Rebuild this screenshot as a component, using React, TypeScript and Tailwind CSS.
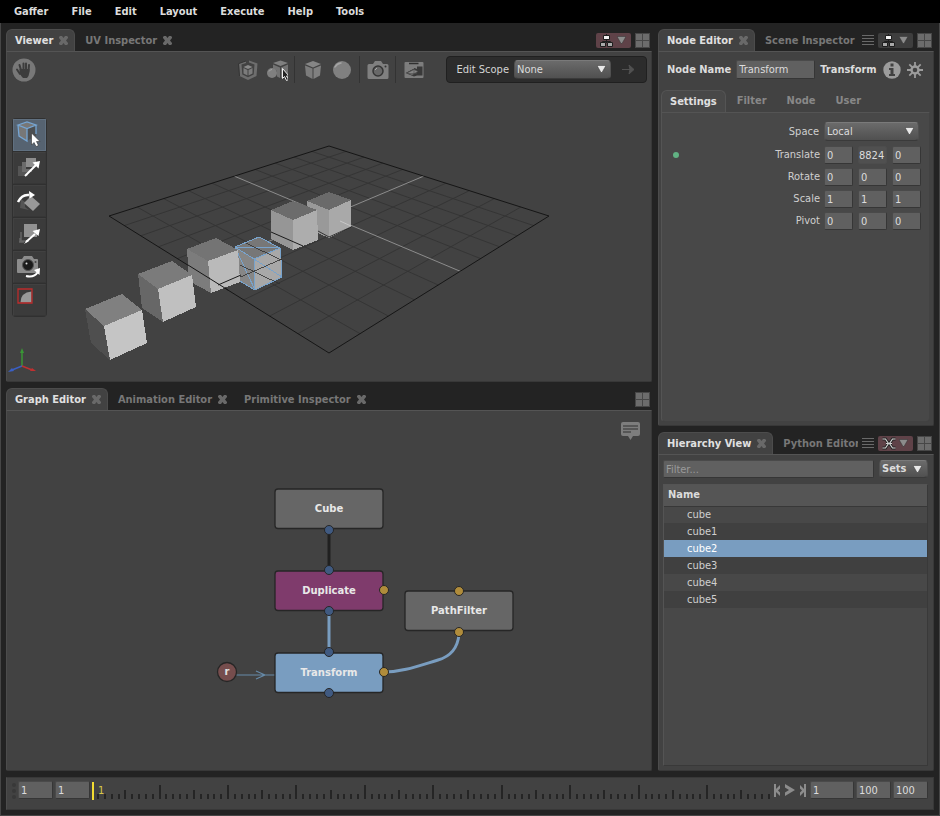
import { useState } from "react";
import type { ReactNode } from "react";
import clsx from "clsx";

const menus = ["Gaffer", "File", "Edit", "Layout", "Execute", "Help", "Tools"];
const cubes = ["cube", "cube1", "cube2", "cube3", "cube4", "cube5"];
const transformRows = [
  { label: "Translate", values: ["0", "8824", "0"], edited: true },
  { label: "Rotate", values: ["0", "0", "0"] },
  { label: "Scale", values: ["1", "1", "1"] },
  { label: "Pivot", values: ["0", "0", "0"] },
];

const field =
  "rounded-xs border border-t-[#4a4a4a] border-l-[#4a4a4a] border-r-[#363636] border-b-[#363636] bg-[#606060] text-[#dcdcdc] outline-none placeholder:text-[#9a9a9a]";
const raised =
  "rounded-sm border border-[#505050] border-t-[#7a7a7a] border-b-[#3a3a3a] bg-linear-to-b from-[#6b6b6b] to-[#505050] text-[#dcdcdc]";

// ─── Small shared icons ──────────────────────────────────────────────────
function CloseIcon() {
  return (
    <svg className="size-[9px]" viewBox="0 0 9 9">
      <path d="M1 0h2l1.500 2L6 0h2l1 1v1L7 4.500 9 7v1L8 9H6L4.500 7 3 9H1L0 8V7l2-2.500L0 2V1z" fill="#696969" />
    </svg>
  );
}

function LayoutButton() {
  return (
    <button aria-label="Panel layout" className="size-[15px] shrink-0">
      <svg viewBox="0 0 15 15" className="block size-[15px]">
        <path d="M0 0h15v15H0z" fill="#474747" />
        <path d="M1 1h6v6H1zM8 1h6v6H8zM1 8h6v6H1zM8 8h6v6H8z" fill="#6c6c6c" />
      </svg>
    </button>
  );
}

function TriangleDown({ className }: { className?: string }) {
  return (
    <svg className={clsx("h-[8px] w-[9px]", className)} viewBox="0 0 9 8">
      <path d="M0 0.500h9L5 7.500H4z" fill="currentColor" stroke="#333" strokeWidth="0.500" />
    </svg>
  );
}

function FocusButton({ kind, pinned }: { kind: "tree" | "links"; pinned?: boolean }) {
  return (
    <button
      aria-label="Node set"
      className={clsx(
        "flex h-[15px] w-[35px] shrink-0 items-center justify-between rounded-xs pr-[5px] pl-1 text-[#8c8c8c]",
        pinned ? "bg-[#5f4248]" : "bg-[#3e3e3e]"
      )}
    >
      <svg className="h-[13px] w-[14px]" viewBox="0 0 14 13">
        {kind === "tree" ? (
          <>
            <path d="M6.500 0v9M2.500 9.500V7.500h8v2" stroke="#1e1e1e" fill="none" />
            <path d="M3.500 1.500h6v4h-6zM0.500 8.500h5v4h-5zM7.500 8.500h5v4h-5z" fill="#aaa" stroke="#1e1e1e" />
            <path d="M4 2h5v3H4z" fill="#f0f0f0" />
          </>
        ) : (
          <>
            <path d="M0.500 2h3l3 4.500-3 4.500h-3M13.500 2h-3l-3 4.500 3 4.500h3M4 6.500h6" stroke="#222" strokeWidth="3" fill="none" />
            <path d="M0.500 2h3l3 4.500-3 4.500h-3M13.500 2h-3l-3 4.500 3 4.500h3M4 6.500h6" stroke="#d0d0d0" strokeWidth="1.200" fill="none" />
          </>
        )}
      </svg>
      <TriangleDown />
    </button>
  );
}

function TabListButton() {
  return (
    <button aria-label="All tabs" className="h-[15px] w-[12px] shrink-0">
      <svg viewBox="0 0 12 15" className="block">
        <path d="M0 2.500h12M0 5.500h12M0 8.500h12M0 11.500h12" stroke="#696969" />
      </svg>
    </button>
  );
}

type PanelProps = { tabs: string[]; tools: ReactNode; className: string; lastClosable?: boolean; children: ReactNode };

function Panel({ tabs, tools, className, lastClosable = true, children }: PanelProps) {
  return (
    <section className={clsx("flex min-h-0 flex-col", className)}>
      <div className="flex h-[22px] shrink-0 items-center gap-[4px] pr-[2px]">
        <div role="tablist" className="flex h-full min-w-0 flex-1 gap-px overflow-hidden">
          {tabs.map((tab, i) => (
            <div
              key={tab}
              className={clsx(
                "flex h-full shrink-0 items-center gap-1.5 rounded-t-md pr-[6px] pl-[8px] font-bold",
                i === 0
                  ? "border border-b-0 border-[#4c4c4c] bg-[#424242] text-[#e0e0e0]"
                  : "border border-b-0 border-transparent text-[#777]"
              )}
            >
              <button role="tab" aria-selected={i === 0}>
                {tab}
              </button>
              {(i < tabs.length - 1 || lastClosable) && (
                <button aria-label={`Close ${tab}`}>
                  <CloseIcon />
                </button>
              )}
            </div>
          ))}
        </div>
        {tools}
      </div>
      <div className="relative flex min-h-0 flex-1 flex-col rounded-b-xs border border-[#383838] border-t-[#545454] border-l-[#4c4c4c] bg-[#424242]">
        {children}
      </div>
    </section>
  );
}

// ─── Viewer scene ────────────────────────────────────────────────────────
// Projects a point of the unit ground square onto the view
function project(u: number, v: number) {
  const w = 1 - 0.2445 * (u + v);
  return [(85.8 * u - 246.65 * v + 329) / w, (17.2 * (u + v) + 146) / w];
}

function gridLine(u1: number, v1: number, u2: number, v2: number) {
  const [x1, y1] = project(u1, v1);
  const [x2, y2] = project(u2, v2);
  return `M${x1} ${y1}L${x2} ${y2}`;
}

const steps = [0.1, 0.2, 0.3, 0.4, 0.6, 0.7, 0.8, 0.9];
const gridPath = steps.map((t) => gridLine(t, 0, t, 1) + gridLine(0, t, 1, t)).join("");

const sceneCubes = [
  { top: "307,201 329,192 351,200 329,210", left: "307,201 329,210 329,238 307,228", right: "329,210 351,200 351,227 329,238", fill: ["#6a6a6a", "#999", "#a9a9a9"] },
  { top: "271,210 293,201 317,210 293,220", left: "271,210 293,220 293,250 271,239", right: "293,220 317,210 318,240 293,250", fill: ["#6c6c6c", "#969696", "#adadad"] },
  { top: "235,247 259,237 280,248 254,259", left: "235,247 254,259 255,290 238,280", right: "254,259 280,248 282,277 255,290", fill: ["#777", "#868686", "#a8a8a8"] },
  { top: "187,249 216,238 238,250 208,261", left: "187,249 208,261 211,293 189,281", right: "208,261 238,250 240,282 211,293", fill: ["#747474", "#7c7c7c", "#bababa"] },
  { top: "138,274 172,261 192,275 158,289", left: "138,274 158,289 163,322 142,308", right: "158,289 192,275 196,307 163,322", fill: ["#7b7b7b", "#676767", "#c0c0c0"] },
  { top: "85,309 122,294 142,310 104,326", left: "85,309 104,326 110,360 91,343", right: "104,326 142,310 147,343 110,360", fill: ["#808080", "#4f4f4f", "#c5c5c5"] },
];

function Scene() {
  return (
    <svg className="absolute inset-0 size-full" viewBox="7 52 644 329" aria-label="3D view">
      <g fill="none" strokeWidth="1">
        <path d={gridPath} stroke="#353535" />
        <path d={gridLine(0.5, 0, 0.5, 1) + gridLine(0, 0.5, 1, 0.5)} stroke="#8c8c8c" />
        <path d="M329 146L549 216L329 353L109 216Z" stroke="#161616" />
      </g>
      <g shapeRendering="crispEdges">
        {sceneCubes.map((c) => (
          <g key={c.top}>
            <polygon points={c.left} fill={c.fill[1]} />
            <polygon points={c.right} fill={c.fill[2]} />
            <polygon points={c.top} fill={c.fill[0]} />
            {c.top.startsWith("235") && (
              <>
                <path
                  d="M235 247L259 237L280 248V258M281 260L282 277L255 290L238 280M235 247L254 259L280 248M254 259L255 290M235 247H280M235 247L255 290M254 259L282 277"
                  fill="none"
                  stroke="#78a3cc"
                />
                <path d="M246 243L281 260M240 265L280 284M222 285L282 259" fill="none" stroke="#2f2f2f" strokeWidth="0.800" />
              </>
            )}
          </g>
        ))}
      </g>
      <g fill="none" stroke="#1b1b1b">
        <path d="M188 265L228 290" stroke="#161616" />
        <path d="M218 285L241 275M271 232L303 246" />
        <path d="M318 231L329 237L351 227" strokeWidth="0.800" />
        <path d="M340 221L351 226" stroke="#c8c8c8" />
      </g>
      <g fill="none" strokeWidth="1.500">
        <path d="M22 366V352" stroke="#3a9636" />
        <path d="M22 366L12 370" stroke="#3a5fc4" />
        <path d="M22 366L32 370" stroke="#c03030" />
      </g>
      <path d="M20 353L22 348L24 353z" fill="#3a9636" />
      <path d="M8 372L12 368L14 371z" fill="#3a5fc4" />
      <path d="M36 371L32 368L30 371z" fill="#c03030" />
    </svg>
  );
}

// ─── Viewer icons ────────────────────────────────────────────────────────
const cubeFaces = (
  <>
    <path d="M3 5l8-3 8 3-8 3.500z" fill="#858585" />
    <path d="M3 6.500l7.500 3V20L4 16.500z" fill="#7c7c7c" />
    <path d="M19 6.500l-7.500 3V20l6.500-3.500z" fill="#808080" />
  </>
);

const viewerIcons: Record<string, ReactNode> = {
  expand: (
    <>
      <path d="M2 4.500L9 2v2L4.500 5.500l.800 10 5.700 2.800 5.700-2.800.800-10L12 3.500V1.500l8.500 3-1 12.500-8.500 4-8.500-4z" fill="#6e6e6e" />
      <path d="M2 4.500L9 2M2.500 17L1.500 4.500" stroke="#343434" fill="none" />
      <path d="M6.500 8L11 6l4.500 2L11 10z" fill="#8a8a8a" />
      <path d="M6.500 9l4 2v5.500l-4-2zM15.500 9l-4 2v5.500l4-2z" fill="#7c7c7c" />
    </>
  ),
  select: (
    <>
      <path d="M7 4l7.500-2.500L22 4l-7.500 3z" fill="#808080" />
      <path d="M7 5.500l7 3V19l-3-1.500V12L7 9zM22 5.500l-7 3V19l7-3z" fill="#737373" />
      <circle cx="6" cy="14" r="5" fill="#808080" />
      <path d="M3 12.500q1-2 3-2" stroke="#a5a5a5" fill="none" />
      <path d="M16.500 9.500v10l2-2 2 4 2-1-2-3.500H23z" fill="#222" stroke="#eee" />
    </>
  ),
  solid: cubeFaces,
  sphere: (
    <>
      <circle cx="11" cy="11" r="9" fill="#808080" />
      <path d="M4 8a8 8 0 0 1 6-4" stroke="#a5a5a5" strokeWidth="1.500" fill="none" strokeLinecap="round" />
    </>
  ),
  camera: (
    <>
      <path d="M2 5h4l2-3h6l2 3h4a1.500 1.500 0 0 1 1.500 1.500v12A1.500 1.500 0 0 1 20 20H2a1.500 1.500 0 0 1-1.500-1.500v-12A1.500 1.500 0 0 1 2 5z" fill="#808080" />
      <circle cx="11" cy="12" r="5" fill="#686868" stroke="#353535" strokeWidth="1.500" />
      <path d="M8 11l2-2" stroke="#aaa" />
      <circle cx="18.500" cy="7.500" r="1" fill="#353535" />
    </>
  ),
  clip: (
    <>
      <rect x="1.500" y="3" width="19" height="16" rx="1" fill="#7d7d7d" />
      <path d="M6 4.500h9.500" stroke="#303030" strokeWidth="1.500" />
      <path d="M2.500 14l9-5 2.500 1V7.500h5.500v9H14l-3 1z" fill="#393939" />
      <path d="M2.500 7.500h8.500v2l-8.500 4z" fill="#7d7d7d" />
      <path d="M4 14l7-3.500 4 2-6 3.500zM11 10.500v5M5 14.500h9" fill="#858585" stroke="#4b4b4b" strokeWidth="0.600" />
    </>
  ),
};

function IconButton({ name, label }: { name: string; label: string }) {
  return (
    <button aria-label={label} className="flex size-[22px] items-center justify-center">
      <svg viewBox="0 0 22 22" className="size-[22px]">
        {viewerIcons[name]}
      </svg>
    </button>
  );
}

function Divider() {
  return <div className="-ml-px h-[27px] w-px bg-[#333]" />;
}

const toolIcons: { label: string; icon: ReactNode }[] = [
  {
    label: "Selection tool",
    icon: (
      <>
        <path d="M6 6l9-3 9 3v11l-9 5-8-5z" fill="#777" />
        <path d="M15 9.500l9-3.500v11l-9 5z" fill="#4c4f52" />
        <path d="M6 6l9-3 9 3-9 3.500zM6 6l1 11 8 5V9.500M24 6v9" fill="none" stroke="#75a5d3" strokeWidth="1.300" />
        <path d="M19.500 14v12l2.500-2.500 2 4 2.500-1-2-4H28z" fill="#fff" stroke="#333" strokeWidth="0.600" />
      </>
    ),
  },
  {
    label: "Translate tool",
    icon: (
      <>
        <path d="M6 14h4v6h6v4H6z" fill="#555" />
        <path d="M10 10h4v7h6v3H10z" fill="#6b6b6b" />
        <path d="M14 6h10v9H14z" fill="#8d8d8d" />
        <path d="M13 24L24 13" stroke="#fff" strokeWidth="2" />
        <path d="M20.500 10.500L28 9l-1.500 7.500z" fill="#fff" />
      </>
    ),
  },
  {
    label: "Rotate tool",
    icon: (
      <>
        <path d="M8 23l1-9 4 3v5l4 3z" fill="#555" />
        <path d="M19 11l9 8-7 7-9-8z" fill="#999" />
        <path d="M6 17q4-8 11-7" fill="none" stroke="#fff" strokeWidth="2.500" />
        <path d="M17 6l6 4-5.500 3.500z" fill="#fff" />
      </>
    ),
  },
  {
    label: "Scale tool",
    icon: (
      <>
        <path d="M8 24v-4M7 24h5M9 14v9h7" fill="none" stroke="#666" strokeWidth="1.500" />
        <path d="M12 6h13v13H12z" fill="#929292" />
        <path d="M14 24l9-8" stroke="#fff" strokeWidth="2" />
        <path d="M12 26l3-4 2 1zM20.500 13L28 11l-1.500 7z" fill="#fff" />
      </>
    ),
  },
  {
    label: "Camera tool",
    icon: (
      <>
        <path d="M6 8h4l2-3h8l2 3h3q1 0 1 1v12q0 1-1 1H6q-1 0-1-1V9q0-1 1-1z" fill="#8c8c8c" />
        <circle cx="16" cy="14" r="5.500" fill="#1b1b1b" stroke="#555" />
        <circle cx="14.500" cy="12.500" r="1" fill="#ddd" />
        <circle cx="23.500" cy="11" r="1" fill="#444" />
        <path d="M14 25q8 2 12-4" fill="none" stroke="#fff" strokeWidth="2" />
        <path d="M22 19l6-2-.500 7z" fill="#fff" />
      </>
    ),
  },
  {
    label: "Crop window tool",
    icon: (
      <>
        <path d="M8.500 18.500q0-10 11-11v11z" fill="#999" />
        <path d="M6 5h14v14H6z" fill="none" stroke="#bd2c2c" strokeWidth="1.300" />
      </>
    ),
  },
];

function Viewer() {
  return (
    <>
      <Scene />
      <div className="relative mt-[4px] flex h-[27px] items-center gap-[7px] pr-[4px] pl-[5px]">
        <button aria-label="Pause" className="size-[24px]">
          <svg viewBox="0 0 24 24">
            <circle cx="12" cy="12" r="11.500" fill="#787878" />
            <g stroke="#3c3c3c" strokeWidth="2" strokeLinecap="round">
              <path d="M9 12L7.500 7M11.500 12V5.500M14 12V5.500M16.500 13l.500-6M8 16l-3-4.500" />
            </g>
            <path d="M7.500 11h10v3q-.500 4-2.500 6h-4q-2-2-3.500-5z" fill="#3c3c3c" />
          </svg>
        </button>
        <div className="flex-1" />
        <IconButton name="expand" label="Expansion" />
        <IconButton name="select" label="Selection mask" />
        <Divider />
        <IconButton name="solid" label="Drawing mode" />
        <IconButton name="sphere" label="Shading mode" />
        <Divider />
        <IconButton name="camera" label="Camera" />
        <Divider />
        <IconButton name="clip" label="Gadgets" />
        <div className="ml-[14px] flex h-[27px] items-center gap-[5px] rounded-sm border border-[#202020] bg-[#2c2c2c] pr-[11px] pl-[10px]">
          <label htmlFor="scope" className="text-[#d4d4d4]">
            Edit Scope
          </label>
          <Dropdown id="scope" value="None" className="w-[97px]" />
          <button aria-label="Edit scope actions" className="ml-[5px]">
            <svg className="h-[11px] w-[14px]" viewBox="0 0 14 11">
              <path d="M1 5.500h9M8 1l5 4.500L8 10l1-4.500z" fill="#515151" stroke="#515151" />
            </svg>
          </button>
        </div>
      </div>
      <div className="relative mt-[35px] ml-[5px] flex w-[35px] flex-col gap-px overflow-hidden rounded-sm bg-[#303030] p-px">
        {toolIcons.map(({ label, icon }, i) => (
          <button
            key={label}
            aria-label={label}
            className={clsx("h-[32px] border", i === 0 ? "border-[#607080] bg-[#566371]" : "border-[#414141] border-r-[#393939] border-b-[#363636] bg-[#3b3b3b]")}
          >
            <svg viewBox="2 1 31 30" className="block h-[30px] w-[31px]">
              {icon}
            </svg>
          </button>
        ))}
      </div>
    </>
  );
}

function Dropdown({ id, value, className }: { id: string; value: string; className: string }) {
  return (
    <div className={clsx("relative", className)}>
      <select id={id} className={clsx("block h-[19px] w-full appearance-none pr-4 pl-[2px] leading-4", raised)}>
        <option>{value}</option>
      </select>
      <TriangleDown className="pointer-events-none absolute top-[5px] right-[5px] text-[#e8e8e8]" />
    </div>
  );
}

// ─── Graph editor ────────────────────────────────────────────────────────
const graphNodes = [
  { name: "Cube", x: 275, y: 489, fill: "#666" },
  { name: "Duplicate", x: 275, y: 571, fill: "#7f3b6c" },
  { name: "PathFilter", x: 405, y: 591, fill: "#666" },
  { name: "Transform", x: 275, y: 653, fill: "#799dc0" },
];

const bluePlugs = [[329, 530], [329, 570], [329, 611], [329, 652], [329, 693]];
const goldPlugs = [[384, 590], [459, 591], [459, 632], [384, 672]];

function GraphEditor() {
  return (
    <>
      <button aria-label="Annotations" className="absolute top-[10px] right-[10px] w-[21px]">
        <svg viewBox="0 0 21 20">
          <path d="M3 1h15q2 0 2 2v10q0 2-2 2h-5l-2.500 4L8 15H3q-2 0-2-2V3q0-2 2-2z" fill="#7d7d7d" />
          <path d="M3 5h15M3 8h15M3 11h8" stroke="#494949" strokeWidth="1.600" />
        </svg>
      </button>
      <svg className="size-full" viewBox="7 411 644 359" aria-label="Node graph">
        <path d="M329 530V570" stroke="#202020" strokeWidth="3" />
        <path d="M329 611V652" stroke="#799dc0" strokeWidth="3" />
        <path d="M384 672C402 672 418 666 438 660C452 656 458 646 459 634" fill="none" stroke="#799dc0" strokeWidth="3" />
        <path d="M236 675H275M256 671L265 675L256 679" fill="none" stroke="#668aa8" strokeWidth="1.200" />
        {graphNodes.map(({ name, x, y, fill }) => (
          <g key={name}>
            <rect x={x} y={y} width="108" height="39.500" rx="3" fill={fill} stroke="#262626" strokeWidth="1.300" />
            <text x={x + 54} y={y + 23} textAnchor="middle" fill="#e8e8e8" className="font-['DejaVu_Sans',sans-serif] text-[10px] font-bold">
              {name}
            </text>
          </g>
        ))}
        {bluePlugs.map(([x, y]) => (
          <circle key={y} cx={x} cy={y} r="4.500" fill="#405a81" stroke="#262626" />
        ))}
        {goldPlugs.map(([x, y]) => (
          <circle key={y} cx={x} cy={y} r="4.500" fill="#b08c3b" stroke="#262626" />
        ))}
        <circle cx="227" cy="672" r="9.500" fill="#764d4d" stroke="#262626" strokeWidth="1.300" />
        <text x="227" y="675" textAnchor="middle" fill="#e0e0e0" className="font-['DejaVu_Sans',sans-serif] text-[10px] font-bold">
          r
        </text>
      </svg>
    </>
  );
}

// ─── Node editor ─────────────────────────────────────────────────────────
function NodeEditor() {
  return (
    <>
      <div className="flex items-center gap-[5px] pt-[8px] pr-[9px] pl-[8px] font-bold text-[#dcdcdc]">
        <label htmlFor="node-name" className="shrink-0">
          Node Name
        </label>
        <input id="node-name" defaultValue="Transform" className={clsx("h-[19px] w-[79px] px-[2px] font-normal", field)} />
        <span className="flex-1">Transform</span>
        <button aria-label="Node information">
          <svg className="size-[18px]" viewBox="0 0 18 18">
            <circle cx="9" cy="9" r="8.700" fill="#9c9c9c" />
            <path d="M7.500 2.500h3v3h-3zM6 7h4.500v6H12v2H6v-2h1.500V9H6z" fill="#424242" />
          </svg>
        </button>
        <button aria-label="Node options">
          <svg className="size-[18px]" viewBox="0 0 18 18">
            <path
              d="M9 1v4M9 13v4M1 9h4M13 9h4M3.300 3.300l3 3M11.700 11.700l3 3M14.700 3.300l-3 3M6.300 11.700l-3 3"
              stroke="#9c9c9c"
              strokeWidth="1.800"
            />
            <circle cx="9" cy="9" r="3.500" fill="none" stroke="#9c9c9c" strokeWidth="2.400" />
          </svg>
        </button>
      </div>
      <div className="mt-[11px] flex min-h-0 flex-1 flex-col pr-[3px] pb-[3px] pl-[2px]">
        <div role="tablist" className="flex h-[22px] shrink-0 gap-[2px] font-bold text-[#888]">
          <button role="tab" aria-selected className="rounded-t-md border border-b-0 border-[#545454] bg-[#484848] px-[8px] text-[#e0e0e0]">
            Settings
          </button>
          {["Filter", "Node", "User"].map((t) => (
            <button key={t} role="tab" className="px-[9px]">
              {t}
            </button>
          ))}
        </div>
        <div className="flex-1 rounded-b-sm border border-[#424242] border-t-[#545454] border-l-[#545454] bg-[#484848] pt-[9px] pr-[8px] text-[#cfcfcf]">
          <div className="mb-[5px] flex items-center justify-end gap-[5px] pr-[2px]">
            <label htmlFor="space">Space</label>
            <Dropdown id="space" value="Local" className="w-[95px]" />
          </div>
          <div className="flex flex-col gap-[4px]">
            {transformRows.map(({ label, values, edited }) => (
              <div key={label} className="flex h-[18px] items-center justify-end gap-[5px]">
                {edited && <span className="mr-auto ml-[11px] size-[6px] rounded-full bg-[#61b283]" />}
                <span className="-mr-px">{label}</span>
                {values.map((v, i) => (
                  <input
                    key={i}
                    aria-label={`${label} ${"xyz"[i]}`}
                    defaultValue={v}
                    className={clsx("h-[18px] w-[29px] border", v === "8824" ? "rounded-xs border-[#4d4d4d] bg-[#505050] text-[#dcdcdc] outline-none" : clsx("px-[2px]", field))}
                  />
                ))}
              </div>
            ))}
          </div>
        </div>
      </div>
    </>
  );
}

// ─── Hierarchy ───────────────────────────────────────────────────────────
function HierarchyView() {
  const [selected, setSelected] = useState("cube2");

  return (
    <div className="flex min-h-0 flex-1 flex-col gap-[6px] pt-[5px] pr-[5px] pb-[4px] pl-[4px]">
      <div className="flex shrink-0 gap-[5px]">
        <input aria-label="Filter" placeholder="Filter..." className={clsx("h-[18px] min-w-0 flex-1 px-[2px]", field)} />
        <button className={clsx("flex h-[18px] w-[49px] items-center justify-between pr-[5px] pl-[2px] font-bold", raised)}>
          Sets
          <TriangleDown className="text-[#e8e8e8]" />
        </button>
      </div>
      <div className="min-h-0 flex-1 border border-[#393939] border-t-[#545454] border-l-[#545454] bg-[#484848]">
        <table className="w-full border-collapse text-left text-[#cfcfcf]">
          <thead>
            <tr className="h-[21px] border-b border-[#383838] bg-[#555]">
              <th className="p-0 pl-[4px] font-bold text-[#dcdcdc]">Name</th>
            </tr>
          </thead>
          <tbody>
            {cubes.map((name, i) => (
              <tr
                key={name}
                onClick={() => setSelected(name)}
                className={clsx("h-[17px]", name === selected ? "bg-[#799dc0] text-white" : i % 2 ? "bg-[#404040]" : "bg-[#484848]")}
              >
                <td className="p-0 pl-[23px]">{name}</td>
              </tr>
            ))}
          </tbody>
        </table>
      </div>
    </div>
  );
}

// ─── Timeline ────────────────────────────────────────────────────────────
function Timeline() {
  const input = clsx("h-[18px] px-[2px]", field);
  return (
    <footer className="mt-[6px] flex h-[33px] shrink-0 items-start border border-[#383838] border-l-[#4c4c4c] bg-[#424242] pt-[3px] pr-[5px] pl-[5px]">
      <div className="mr-[2px] flex w-[4px] flex-col gap-[2px] pt-[2px]">
        {[0, 1, 2].map((i) => (
          <span key={i} className="size-[4px] rounded-full bg-[#383838]" />
        ))}
      </div>
      <input aria-label="Start frame" defaultValue="1" className={clsx("mr-[2px] w-[35px]", input)} />
      <input aria-label="Range start" defaultValue="1" className={clsx("w-[35px]", input)} />
      <div className="relative mt-px ml-[2px] flex h-[17px] flex-1 items-end justify-between pl-[5px]">
        {Array.from({ length: 99 }, (_, i) => i + 1).map((frame) => (
          <span key={frame} className={clsx("w-[2px] bg-[#252525]", frame % 10 === 0 ? "h-[14px]" : frame % 5 === 0 ? "h-[9px]" : "h-[5px]")} />
        ))}
        <div className="absolute top-0 left-0 flex h-[18px] items-center border-l-2 border-[#f3dc32] pl-[4px] text-[#d8c848]">1</div>
      </div>
      <div className="mx-[4px] flex h-[18px] w-[32px] items-center justify-between text-[#8c8c8c]">
        <button aria-label="First frame">
          <svg className="h-[13px] w-[6px]" viewBox="0 0 6 13">
            <path d="M0 0h2v5l4-4v3.500L4 6.500l2 2V12L2 8v5H0z" fill="currentColor" />
          </svg>
        </button>
        <button aria-label="Play">
          <svg className="h-[12px] w-[10px]" viewBox="0 0 10 12">
            <path d="M0 0l10 6-10 6V8.500L4 6 0 3.500z" fill="currentColor" />
          </svg>
        </button>
        <button aria-label="Last frame">
          <svg className="h-[13px] w-[6px]" viewBox="0 0 6 13">
            <path d="M6 0H4v5L0 1v3.500l2 2-2 2V12l4-4v5h2z" fill="currentColor" />
          </svg>
        </button>
      </div>
      <input aria-label="Current frame" defaultValue="1" className={clsx("mr-[2px] w-[44px]", input)} />
      <input aria-label="Range end" defaultValue="100" className={clsx("mr-[2px] w-[35px]", input)} />
      <input aria-label="End frame" defaultValue="100" className={clsx("w-[35px]", input)} />
    </footer>
  );
}

export default function App() {
  return (
    <div className="flex h-screen min-h-[640px] flex-col bg-[#232323] font-['DejaVu_Sans_Condensed','DejaVu_Sans',sans-serif] text-[11px] leading-4 text-[#dcdcdc]">
      <nav className="flex h-[23px] shrink-0 items-center gap-[23px] bg-black pl-[14px] font-bold">
        {menus.map((m) => (
          <button key={m}>{m}</button>
        ))}
      </nav>
      <div className="flex min-h-0 flex-1 flex-col border-x border-b border-[#464646] px-[5px] pt-[6px] pb-[5px]">
        <main className="flex min-h-0 flex-1 gap-[6px]">
          <div className="flex min-w-0 flex-646 flex-col gap-[6px]">
            <Panel
              tabs={["Viewer", "UV Inspector"]}
              className="flex-353"
              tools={
                <>
                  <FocusButton kind="tree" pinned />
                  <LayoutButton />
                </>
              }
            >
              <Viewer />
            </Panel>
            <Panel tabs={["Graph Editor", "Animation Editor", "Primitive Inspector"]} className="flex-383" tools={<LayoutButton />}>
              <GraphEditor />
            </Panel>
          </div>
          <div className="flex min-w-0 flex-276 flex-col gap-[6px]">
            <Panel
              tabs={["Node Editor", "Scene Inspector"]}
              className="flex-397"
              lastClosable={false}
              tools={
                <>
                  <TabListButton />
                  <FocusButton kind="tree" />
                  <LayoutButton />
                </>
              }
            >
              <NodeEditor />
            </Panel>
            <Panel
              tabs={["Hierarchy View", "Python Editor"]}
              className="flex-339"
              lastClosable={false}
              tools={
                <>
                  <TabListButton />
                  <FocusButton kind="links" pinned />
                  <LayoutButton />
                </>
              }
            >
              <HierarchyView />
            </Panel>
          </div>
        </main>
        <Timeline />
      </div>
    </div>
  );
}
